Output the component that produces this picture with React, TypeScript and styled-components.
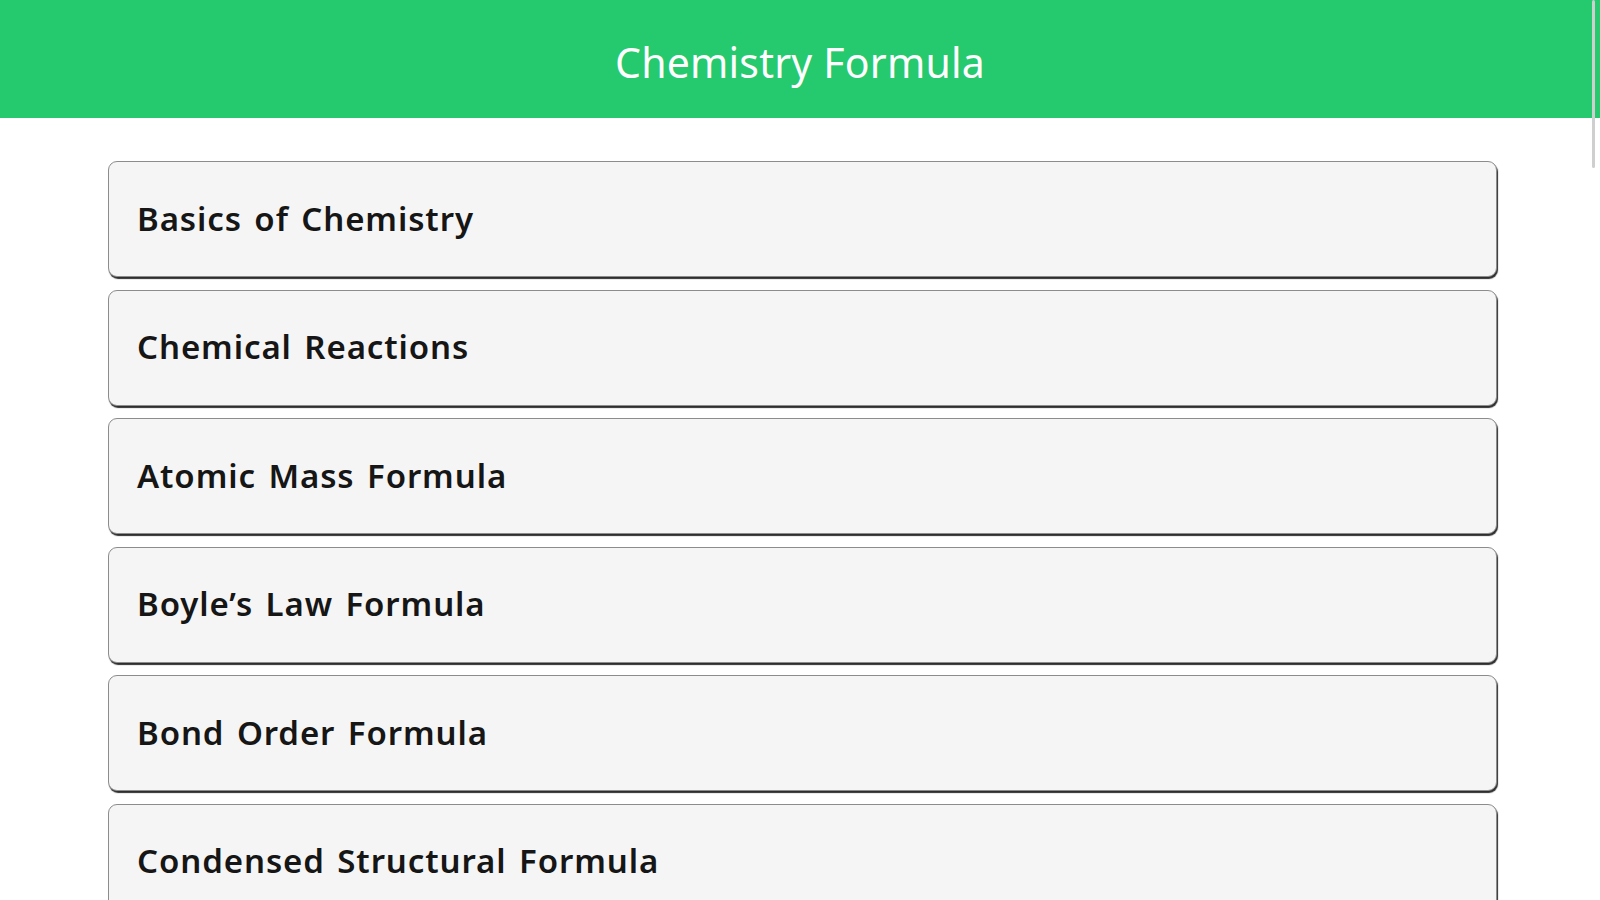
import React from "react";
import styled, { createGlobalStyle } from "styled-components";

const GlobalStyle = createGlobalStyle`
	html, body {
		margin: 0;
		padding: 0;
		height: 100%;
		overflow: hidden;
		background: #ffffff;
	}
`;

const Page = styled.div`
	position: relative;
	height: 900px;
	width: 1600px;
	overflow: hidden;
	font-family: "Noto Sans", "DejaVu Sans", sans-serif;
`;

const Header = styled.header`
	display: flex;
	align-items: center;
	justify-content: center;
	height: 118px;
	padding-top: 5px;
	box-sizing: border-box;
	background: #25c96e;
	color: #ffffff;
	font-size: 41px;
	letter-spacing: 0.2px;
`;

const List = styled.div`
	display: flex;
	flex-direction: column;
	gap: 12.6px;
	padding: 43px 103px 0 108px;
`;

const Item = styled.div`
	display: flex;
	align-items: center;
	height: 116px;
	box-sizing: border-box;
	padding: 0 28px 2px;
	background: #f5f5f5;
	border: 1px solid #8c8c8c;
	border-radius: 9px;
	box-shadow: 1px 2px 1px #2e2e2e;
	color: #161616;
	font-size: 33px;
	font-weight: 600;
	letter-spacing: 0.9px;
	word-spacing: 3px;
	flex-shrink: 0;
`;

const Scrollbar = styled.div`
	position: absolute;
	top: 0;
	right: 5px;
	width: 3px;
	height: 168px;
	border-radius: 2px;
	background: #cfcfcf;
`;

const topics = [
	"Basics of Chemistry",
	"Chemical Reactions",
	"Atomic Mass Formula",
	"Boyle’s Law Formula",
	"Bond Order Formula",
	"Condensed Structural Formula",
];

const App = () => {
	return (
		<Page>
			<GlobalStyle />
			<Header>Chemistry Formula</Header>
			<List>
				{topics.map((topic) => (
					<Item key={topic}>{topic}</Item>
				))}
			</List>
			<Scrollbar />
		</Page>
	);
};

export default App;
